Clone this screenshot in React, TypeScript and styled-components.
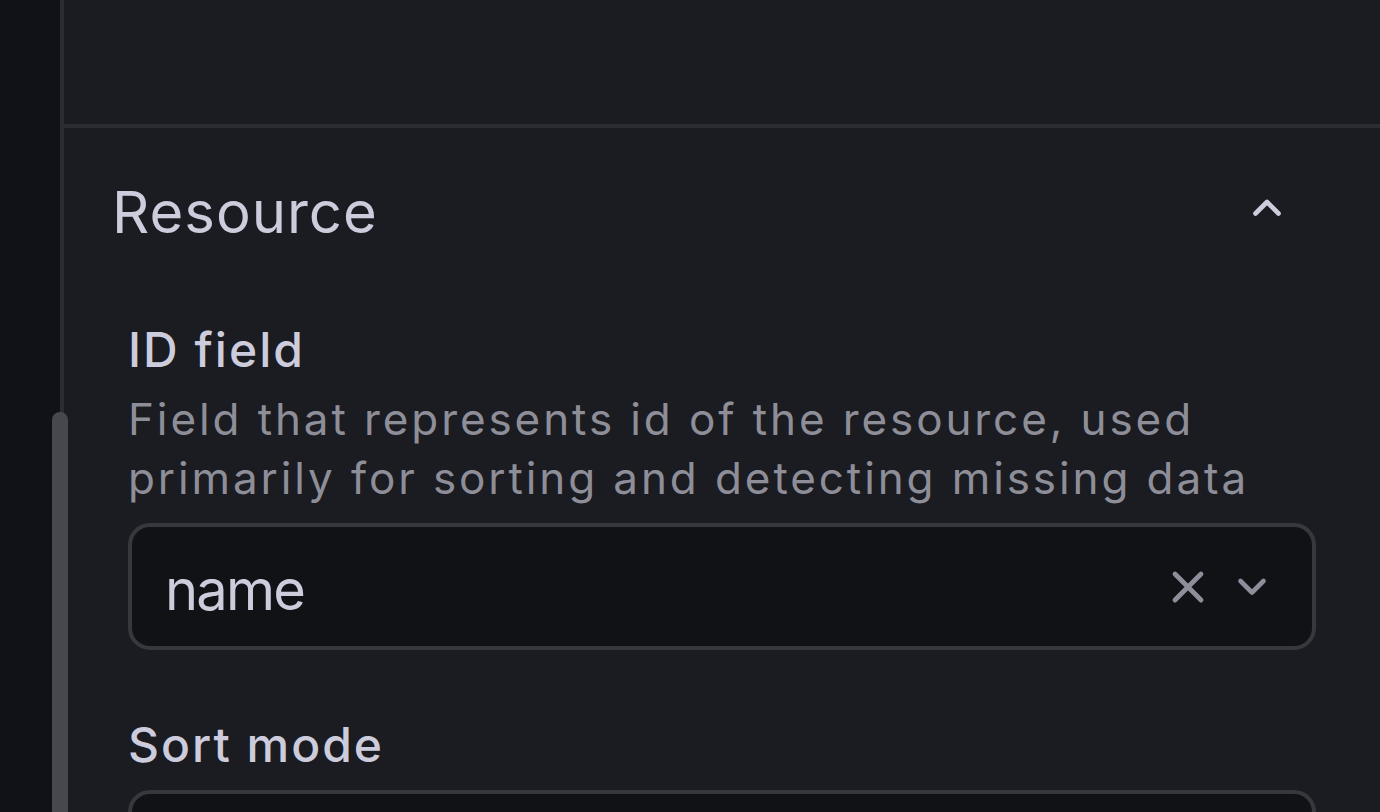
import React from "react";
import styled, { createGlobalStyle } from "styled-components";

const GlobalStyle = createGlobalStyle`
  html, body {
    margin: 0;
    padding: 0;
    background: #111217;
  }
  body {
    font-family: Inter, "Noto Sans", "Liberation Sans", sans-serif;
    -webkit-font-smoothing: antialiased;
  }
`;

const Page = styled.div`
  display: flex;
  width: 1380px;
  height: 812px;
  overflow: hidden;
`;

const Rail = styled.div`
  width: 60px;
  flex-shrink: 0;
  background: #111217;
`;

const Pane = styled.div`
  position: relative;
  flex: 1;
  display: flex;
  flex-direction: column;
  background: #1b1c21;
  border-left: 4px solid #2c2d33;
`;

const ScrollThumb = styled.div`
  position: absolute;
  left: -12px;
  top: 412px;
  width: 16px;
  height: 600px;
  border-radius: 8px;
  background: #47484e;
`;

const PrevGroup = styled.div`
  flex-shrink: 0;
  height: 124px;
  border-bottom: 4px solid #2c2d33;
`;

const Group = styled.section`
  flex-shrink: 0;
  display: flex;
  flex-direction: column;
  padding: 49px 64px 0 48px;
`;

const GroupHeader = styled.div`
  display: flex;
  align-items: center;
  justify-content: space-between;
  height: 70px;
  padding-right: 34px;
`;

const GroupTitle = styled.h2`
  margin: 0;
  font-size: 58px;
  line-height: 70px;
  font-weight: 400;
  letter-spacing: 1px;
  color: #ccccdc;
`;

const Body = styled.div`
  display: flex;
  flex-direction: column;
  padding: 74px 0 0 16px;
`;

const Field = styled.div<{ $gap: number }>`
  display: flex;
  flex-direction: column;
  margin-bottom: ${(p) => p.$gap}px;
`;

const Label = styled.label`
  font-size: 48px;
  line-height: 58px;
  font-weight: 500;
  letter-spacing: 2px;
  color: #ccccdc;
`;

const Description = styled.div`
  margin-top: 11px;
  font-size: 44px;
  line-height: 59px;
  font-weight: 400;
  letter-spacing: 2.9px;
  color: #8e8e99;
`;

const Select = styled.div<{ $top: number }>`
  display: flex;
  align-items: center;
  box-sizing: border-box;
  height: 127px;
  margin-top: ${(p) => p.$top}px;
  padding: 6px 45px 0 33px;
  background: #111216;
  border: 4px solid #37383e;
  border-radius: 22px;
`;

const SelectValue = styled.span`
  flex: 1;
  font-size: 56px;
  line-height: 70px;
  font-weight: 400;
  letter-spacing: -1.8px;
  color: #ccccdc;
`;

const Indicators = styled.div`
  display: flex;
  align-items: center;
  gap: 32px;
  margin-top: -6px;
`;

const ChevronUp = () => (
  <svg width="30" height="20" viewBox="0 0 30 20" style={{ marginBottom: 9 }}>
    <polyline
      points="3.5,15.5 15,4 26.5,15.5"
      fill="none"
      stroke="#ccccdc"
      strokeWidth="4.6"
      strokeLinecap="round"
      strokeLinejoin="round"
    />
  </svg>
);

const ClearIcon = () => (
  <svg width="34" height="34" viewBox="0 0 34 34">
    <path
      d="M4 4 L30 30 M30 4 L4 30"
      fill="none"
      stroke="#8e8e9a"
      strokeWidth="4.8"
      strokeLinecap="round"
    />
  </svg>
);

const ChevronDown = () => (
  <svg width="30" height="20" viewBox="0 0 30 20">
    <polyline
      points="3.5,4 15,15.5 26.5,4"
      fill="none"
      stroke="#8e8e9a"
      strokeWidth="4.6"
      strokeLinecap="round"
      strokeLinejoin="round"
    />
  </svg>
);

function App() {
  return (
    <>
      <GlobalStyle />
      <Page>
        <Rail />
        <Pane>
          <ScrollThumb />
          <PrevGroup />
          <Group>
            <GroupHeader>
              <GroupTitle>Resource</GroupTitle>
              <ChevronUp />
            </GroupHeader>
            <Body>
              <Field $gap={66}>
                <Label>ID field</Label>
                <Description>
                  Field that represents id of the resource, used primarily for
                  sorting and detecting missing data
                </Description>
                <Select $top={15}>
                  <SelectValue>name</SelectValue>
                  <Indicators>
                    <ClearIcon />
                    <ChevronDown />
                  </Indicators>
                </Select>
              </Field>
              <Field $gap={0}>
                <Label>Sort mode</Label>
                <Select $top={16}>
                  <SelectValue />
                </Select>
              </Field>
            </Body>
          </Group>
        </Pane>
      </Page>
    </>
  );
}

export default App;
